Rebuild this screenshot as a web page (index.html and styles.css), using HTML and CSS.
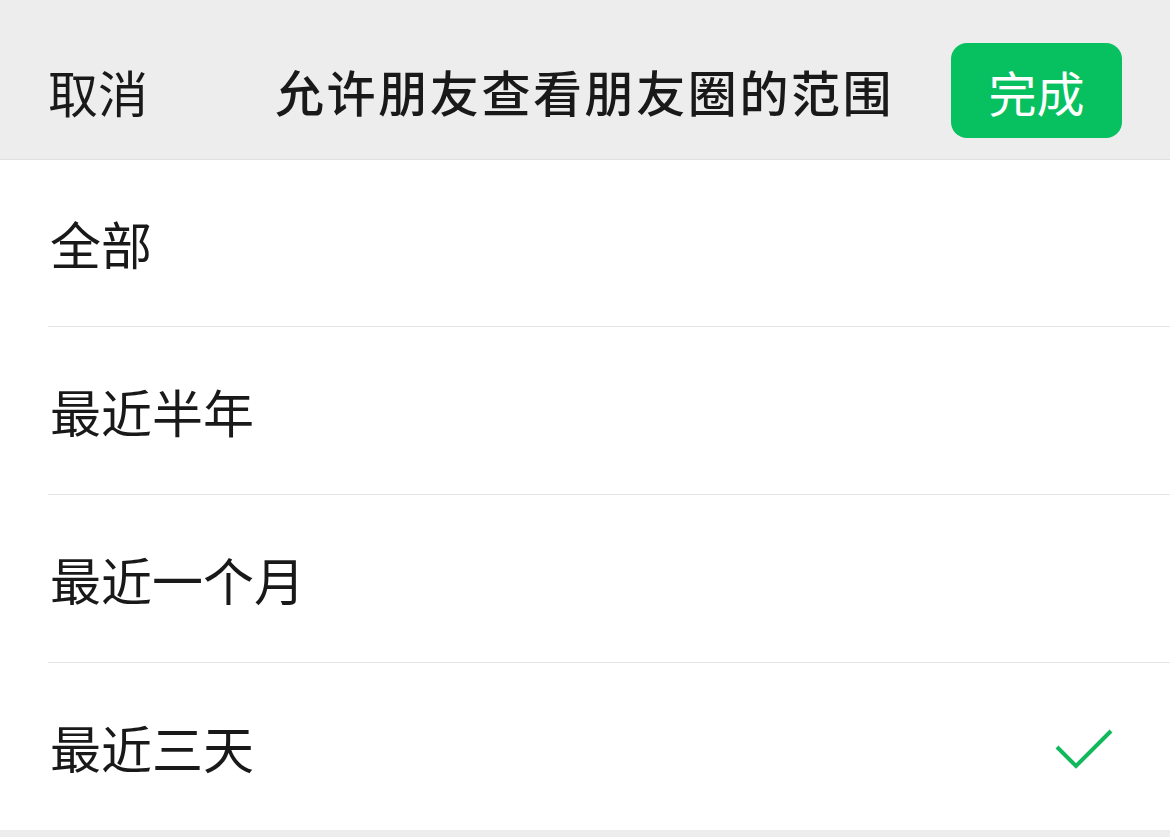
FILE: index.html
```html
<!DOCTYPE html>
<html lang="zh-CN">
<head>
    <meta charset="UTF-8">
    <meta name="viewport" content="width=device-width, initial-scale=1.0">
    <title>允许朋友查看朋友圈的范围</title>
    <link rel="stylesheet" href="styles.css">
</head>
<body>
    <div class="header">
        <span class="cancel">取消</span>
        <span class="title">允许朋友查看朋友圈的范围</span>
        <span class="done">完成</span>
    </div>

    <ul class="options">
        <li class="option">全部</li>
        <li class="option">最近半年</li>
        <li class="option">最近一个月</li>
        <li class="option selected">
            最近三天
            <svg class="check" width="60" height="44" viewBox="0 0 60 44">
                <path d="M3 20 L22 39 L57 4" fill="none" stroke="#10b95c" stroke-width="4"/>
            </svg>
        </li>
    </ul>
</body>
</html>
```

FILE: styles.css
```css
body {
    margin: 0;
    font-family: "Noto Sans CJK SC", "Noto Sans", sans-serif;
    background-color: #ededed;
    color: #191919;
}

.header {
    height: 160px;
    box-sizing: border-box;
    padding: 22px 48px 0 48px;
    display: flex;
    align-items: center;
    background-color: #ededed;
    border-bottom: 1px solid #e0e0e0;
}

.cancel {
    font-size: 50px;
    width: 227px;
}

.title {
    font-size: 49px;
    font-weight: 500;
    flex: 1;
    letter-spacing: 2.6px;
}

.done {
    font-size: 48px;
    color: #fff;
    background-color: #07c160;
    border-radius: 16px;
    width: 171px;
    height: 95px;
    display: flex;
    align-items: center;
    justify-content: center;
    margin-left: 10px;
}

.options {
    list-style: none;
    margin: 0;
    padding: 0 0 0 48px;
    background-color: #fff;
}

.option {
    height: 167px;
    display: flex;
    align-items: center;
    justify-content: space-between;
    padding: 0 56px 0 2px;
    font-size: 51px;
    border-top: 1px solid #e5e5e5;
}

.option:first-child {
    border-top: none;
    height: 166px;
}

.check {
    margin-top: 4px;
}
```
